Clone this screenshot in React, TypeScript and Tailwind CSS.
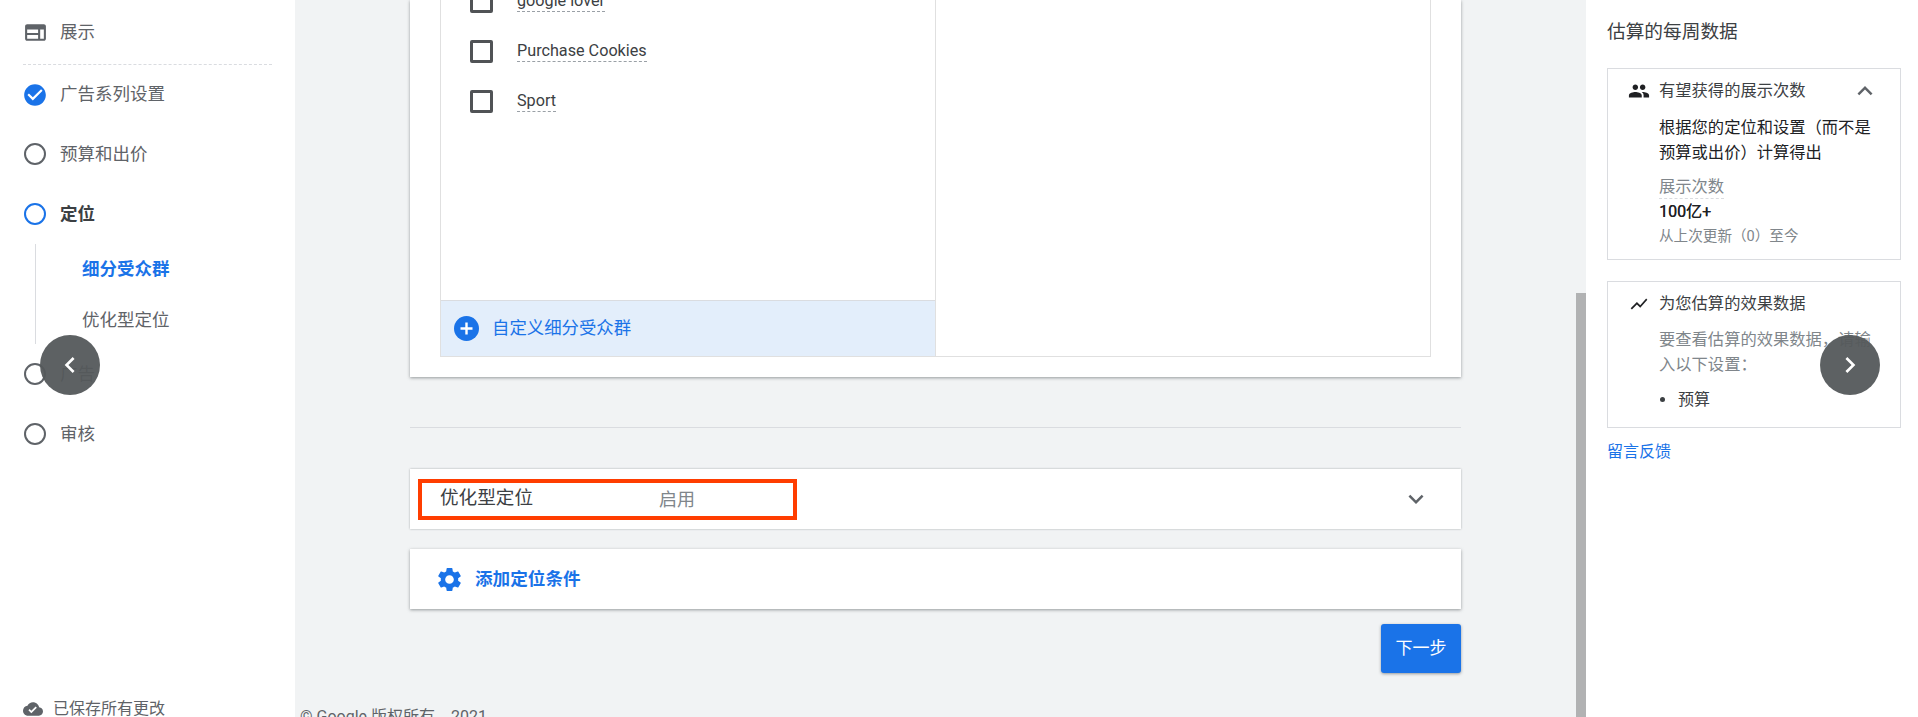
import React from 'react';

const Icon: React.FC<{ d: string; className: string }> = ({ d, className }) => (
    <svg viewBox="0 0 24 24" fill="currentColor" className={className}>
        <path d={d} />
    </svg>
);

const CHECK_CIRCLE = 'M12 2C6.48 2 2 6.48 2 12s4.48 10 10 10 10-4.48 10-10S17.52 2 12 2zm-2 15l-5-5 1.41-1.41L10 14.17l7.59-7.59L19 8l-9 9z';
const WEB = 'M20 4H4c-1.1 0-2 .9-2 2v12c0 1.1.9 2 2 2h16c1.1 0 2-.9 2-2V6c0-1.1-.9-2-2-2zM4 9h10.5v3.5H4V9zm0 5.5h10.5V18H4v-3.5zM20 18h-3.5V9H20v9z';
const CLOUD_DONE = 'M19.35 10.04C18.67 6.59 15.64 4 12 4 9.11 4 6.6 5.64 5.35 8.04 2.34 8.36 0 10.91 0 14c0 3.31 2.69 6 6 6h13c2.76 0 5-2.24 5-5 0-2.64-2.05-4.78-4.65-4.96zM10 17l-3.5-3.5 1.41-1.41L10 14.17 15.18 9l1.41 1.41L10 17z';
const PEOPLE = 'M16 11c1.66 0 2.99-1.34 2.99-3S17.66 5 16 5c-1.66 0-3 1.34-3 3s1.34 3 3 3zm-8 0c1.66 0 2.99-1.34 2.99-3S9.66 5 8 5C6.34 5 5 6.34 5 8s1.34 3 3 3zm0 2c-2.33 0-7 1.17-7 3.5V19h14v-2.5c0-2.33-4.67-3.5-7-3.5zm8 0c-.29 0-.62.02-.97.05 1.16.84 1.97 1.97 1.97 3.45V19h6v-2.5c0-2.33-4.67-3.5-7-3.5z';
const SHOW_CHART = 'M3.5 18.49l6-6.01 4 4L22 6.92l-1.41-1.41-7.09 7.97-4-4L2 16.99z';
const GEAR = 'M19.14 12.94c.04-.3.06-.61.06-.94 0-.32-.02-.64-.07-.94l2.03-1.58c.18-.14.23-.41.12-.61l-1.92-3.32c-.12-.22-.37-.29-.59-.22l-2.39.96c-.5-.38-1.03-.7-1.62-.94l-.36-2.54c-.04-.24-.24-.41-.48-.41h-3.84c-.24 0-.43.17-.47.41l-.36 2.54c-.59.24-1.13.57-1.62.94l-2.39-.96c-.22-.08-.47 0-.59.22L2.74 8.87c-.12.21-.08.47.12.61l2.03 1.58c-.05.3-.09.63-.09.94s.02.64.07.94l-2.03 1.58c-.18.14-.23.41-.12.61l1.92 3.32c.12.22.37.29.59.22l2.39-.96c.5.38 1.03.7 1.62.94l.36 2.54c.05.24.24.41.48.41h3.84c.24 0 .44-.17.47-.41l.36-2.54c.59-.24 1.13-.56 1.62-.94l2.39.96c.22.08.47 0 .59-.22l1.92-3.32c.12-.22.07-.47-.12-.61l-2.01-1.58zM12 15.6c-1.98 0-3.6-1.62-3.6-3.6s1.62-3.6 3.6-3.6 3.6 1.62 3.6 3.6-1.62 3.6-3.6 3.6z';
const ARROW_DOWN = 'M7.41 8.59L12 13.17l4.59-4.58L18 10l-6 6-6-6 1.41-1.41z';
const ARROW_UP = 'M7.41 15.41L12 10.83l4.59 4.58L18 14l-6-6-6 6z';
const ARROW_LEFT = 'M15.41 7.41L14 6l-6 6 6 6 1.41-1.41L10.83 12z';
const ARROW_RIGHT = 'M10 6L8.59 7.41 13.17 12l-4.58 4.59L10 18l6-6z';

const Step: React.FC<{ label: string; active?: boolean }> = ({ label, active }) => (
    <div className="h-[60px] flex items-center pl-[24px]">
        <span className={`w-[22px] h-[22px] rounded-full border-2 ${active ? 'border-[#1a73e8]' : 'border-[#5f6368]'}`} />
        <span className={`ml-[14px] text-[17.5px] ${active ? 'font-bold text-[#3c4043]' : 'text-[#5f6368]'}`}>{label}</span>
    </div>
);

const Audience: React.FC<{ label: string }> = ({ label }) => (
    <div className="h-[50px] flex items-center pl-[29px] shrink-0">
        <span className="w-[23px] h-[23px] rounded-[2px] border-[3px] border-[#505356]" />
        <span className="ml-[24px] text-[16.2px] leading-[20px] text-[#3c4043] border-b border-dashed border-[#9aa0a6]">{label}</span>
    </div>
);

export default function App() {
    return (
        <div className="relative flex w-[1918px] h-[717px] overflow-hidden bg-white font-['Roboto','Noto_Sans_CJK_SC',sans-serif]">
            {/* Left steps */}
            <aside className="w-[295px] shrink-0 flex flex-col">
                <div className="h-[65px] mx-[23px] border-b border-dashed border-[#dadce0] flex items-center">
                    <Icon d={WEB} className="w-[25px] h-[25px] text-[#5f6368] ml-0" />
                    <span className="ml-[12px] text-[17.5px] text-[#5f6368]">展示</span>
                </div>
                <div className="h-[59px] flex items-center pl-[22px]">
                    <Icon d={CHECK_CIRCLE} className="w-[26px] h-[26px] text-[#1a73e8]" />
                    <span className="ml-[12px] text-[17.5px] text-[#5f6368]">广告系列设置</span>
                </div>
                <div className="h-[60px] flex items-center pl-[24px]">
                    <span className="w-[22px] h-[22px] rounded-full border-2 border-[#5f6368]" />
                    <span className="ml-[14px] text-[17.5px] text-[#5f6368]">预算和出价</span>
                </div>
                <Step label="定位" active />
                <div className="ml-[35px] h-[100px] border-l border-[#dadce0] pl-[46px] flex flex-col">
                    <div className="h-[50px] flex items-center text-[17.5px] font-bold text-[#1a73e8]">细分受众群</div>
                    <div className="h-[50px] pt-[2px] flex items-center text-[17.5px] text-[#5f6368]">优化型定位</div>
                </div>
                <Step label="广告" />
                <Step label="审核" />
                <div className="mt-auto h-[36px] pl-[23px] flex items-center translate-y-[10px]">
                    <Icon d={CLOUD_DONE} className="w-[20px] h-[20px] text-[#5f6368]" />
                    <span className="ml-[10px] text-[16px] text-[#5f6368]">已保存所有更改</span>
                </div>
            </aside>

            {/* Main column */}
            <main className="w-[1281px] shrink-0 bg-[#f1f3f4] pl-[5px] overflow-hidden">
                <div className="ml-[110px] w-[1051px]">
                    <section className="bg-white px-[30px] pb-[20px] shadow-[0_1px_3px_rgba(60,64,67,0.5)]">
                        <div className="flex h-[357px] border-x border-b border-[#e0e0e0]">
                            <div className="w-[495px] flex flex-col border-r border-[#e0e0e0]">
                                <div className="flex-1 flex flex-col -mt-[24px]">
                                    <Audience label="google lover" />
                                    <Audience label="Purchase Cookies" />
                                    <Audience label="Sport" />
                                </div>
                                <div className="h-[56px] bg-[#e3eefb] border-t border-[#dadce0] flex items-center pl-[13px]">
                                    <span className="w-[25px] h-[25px] rounded-full bg-[#1a73e8] flex items-center justify-center">
                                        <svg viewBox="0 0 25 25" className="w-[25px] h-[25px] text-white" stroke="currentColor" strokeWidth="2.4">
                                            <path d="M12.5 6.5v12M6.5 12.5h12" />
                                        </svg>
                                    </span>
                                    <span className="ml-[13px] text-[17.4px] text-[#1a73e8]">自定义细分受众群</span>
                                </div>
                            </div>
                            <div className="flex-1" />
                        </div>
                    </section>

                    <div className="mt-[50px] h-px bg-[#dadce0]" />

                    <section className="mt-[41px] h-[60px] bg-white shadow-[0_0_2px_rgba(60,64,67,0.4)] flex items-center justify-between pl-[8px] pr-[30px]">
                        <div className="w-[379px] h-[41px] border-[4px] border-[#ff3d00] flex items-center pl-[18px]">
                            <span className="w-[219px] text-[18.6px] text-[#3c4043]">优化型定位</span>
                            <span className="text-[18px] text-[#80868b]">启用</span>
                        </div>
                        <Icon d={ARROW_DOWN} className="w-[30px] h-[30px] text-[#5f6368]" />
                    </section>

                    <section className="mt-[20px] h-[60px] bg-white shadow-[0_1px_3px_rgba(60,64,67,0.5)] flex items-center pl-[25px]">
                        <Icon d={GEAR} className="w-[29px] h-[29px] text-[#1a73e8]" />
                        <span className="ml-[11px] text-[17.6px] font-bold text-[#1a73e8]">添加定位条件</span>
                    </section>

                    <div className="mt-[15px] flex justify-end">
                        <button className="w-[80px] h-[49px] rounded-[3px] bg-[#1a73e8] text-[17px] text-white shadow-[0_1px_3px_rgba(60,64,67,0.5)]">下一步</button>
                    </div>
                </div>
                <p className="mt-[34px] text-[16px] leading-[20px] text-[#5f6368] whitespace-nowrap">© Google 版权所有，2021</p>
            </main>

            {/* Page scrollbar */}
            <div className="w-[10px] shrink-0 bg-[#f1f3f4] pt-[293px]">
                <div className="h-full bg-[#b1b2b3]" />
            </div>

            {/* Right estimates panel */}
            <aside className="flex-1 pl-[21px] pr-[17px]">
                <h2 className="mt-[20px] h-[24px] leading-[24px] text-[18.7px] text-[#3c4043]">估算的每周数据</h2>
                <div className="mt-[24px] h-[192px] border border-[#dadce0] pt-[10px] pl-[20px] pr-[20px]">
                    <div className="flex items-center h-[24px]">
                        <Icon d={PEOPLE} className="w-[22px] h-[22px] text-[#202124]" />
                        <span className="ml-[9px] flex-1 text-[16.3px] text-[#3c4043]">有望获得的展示次数</span>
                        <Icon d={ARROW_UP} className="w-[30px] h-[30px] text-[#5f6368]" />
                    </div>
                    <div className="pl-[31px]">
                        <p className="mt-[12px] text-[16.3px] leading-[25px] text-[#202124]">根据您的定位和设置（而不是<br />预算或出价）计算得出</p>
                        <p className="mt-[11px] w-fit text-[16.3px] leading-[22px] text-[#80868b] border-b border-dashed border-[#dadce0]">展示次数</p>
                        <p className="mt-[2px] text-[16px] leading-[22px] text-[#202124] [text-shadow:0.3px_0_0_#202124]">100亿+</p>
                        <p className="mt-[2px] text-[14.6px] leading-[22px] text-[#80868b]">从上次更新（0）至今</p>
                    </div>
                </div>
                <div className="mt-[21px] h-[147px] border border-[#dadce0] pt-[10px] pl-[20px] pr-[20px]">
                    <div className="flex items-center h-[24px]">
                        <Icon d={SHOW_CHART} className="w-[20px] h-[20px] text-[#202124] ml-[1px]" />
                        <span className="ml-[10px] text-[16.3px] text-[#3c4043]">为您估算的效果数据</span>
                    </div>
                    <div className="pl-[31px]">
                        <p className="mt-[11px] text-[16.3px] leading-[25px] text-[#80868b]">要查看估算的效果数据，请输入以下设置：</p>
                        <ul className="mt-[10px] flex items-center h-[25px] text-[16px] text-[#3c4043]">
                            <li className="flex items-center"><span className="w-[5px] h-[5px] rounded-full bg-[#3c4043] ml-[1px] mr-[13px]" />预算</li>
                        </ul>
                    </div>
                </div>
                <a className="block mt-[13px] text-[16px] leading-[22px] text-[#1a73e8]">留言反馈</a>
            </aside>

            {/* Floating scroll buttons */}
            <button className="absolute left-[40px] top-[335px] w-[60px] h-[60px] rounded-full bg-[#54585b]/95 flex items-center justify-center">
                <Icon d={ARROW_LEFT} className="w-[32px] h-[32px] text-white" />
            </button>
            <button className="absolute left-[1820px] top-[335px] w-[60px] h-[60px] rounded-full bg-[#54585b]/95 flex items-center justify-center">
                <Icon d={ARROW_RIGHT} className="w-[32px] h-[32px] text-white" />
            </button>
        </div>
    );
}
